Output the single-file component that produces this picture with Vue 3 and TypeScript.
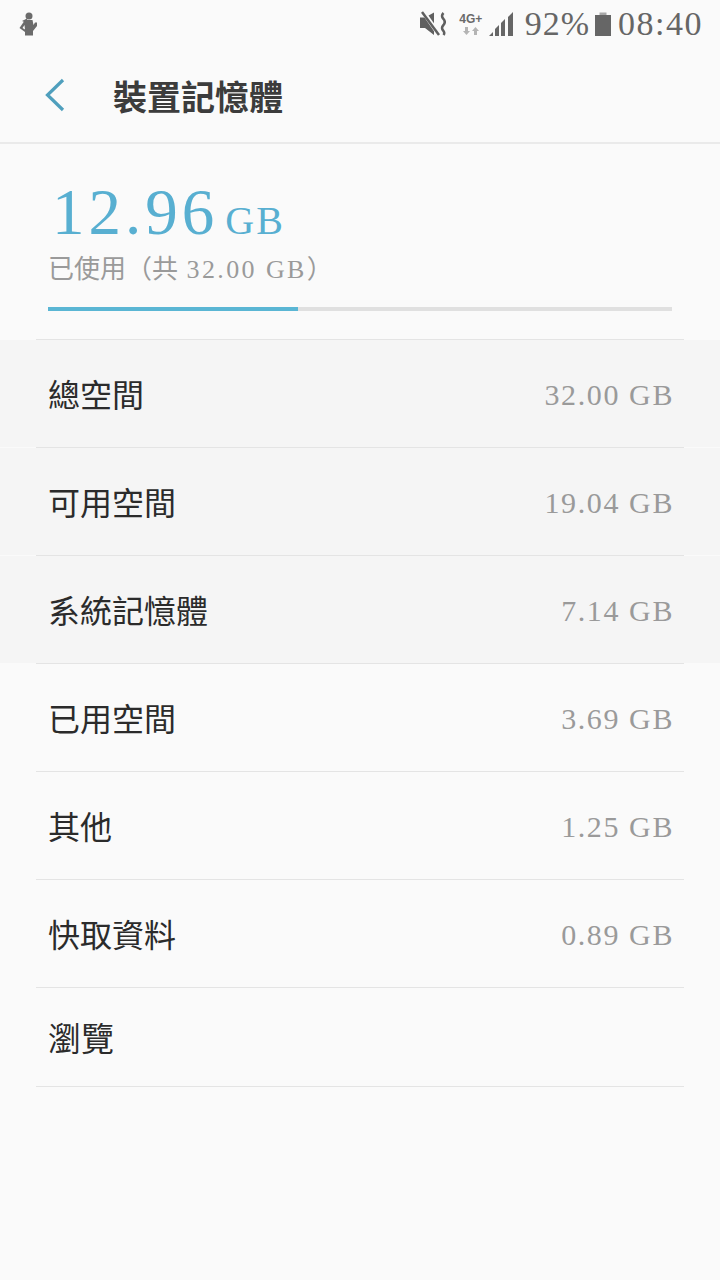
<template>
  <div class="screen">
    <!-- Status bar -->
    <div class="status-bar">
      <svg width="22" height="26" viewBox="0 0 22 26">
        <circle cx="11" cy="5" r="3.500" fill="#6b6b6b" />
        <path d="M10 7 L4 10 L7.500 11.500 Z" fill="#6b6b6b" />
        <path fill-rule="evenodd" d="M7 9 L1.500 17 L7 21 L7 24.500 H15 V20 L19 15 V11.500 H17 L15.500 14 L14.500 9 Z M6.500 14 L4.500 17 L7 18.500 Z" fill="#6b6b6b" />
      </svg>
      <div class="status-right">
        <svg width="26" height="26" viewBox="0 0 26 26">
          <path d="M0 6.500 H5 L14 1.500 V24 L5 17 H0 Z" fill="#5f5f5f" />
          <path d="M2 -1 L20 25" stroke="#fafafa" stroke-width="4.500" />
          <path d="M2 1 L19 24" stroke="#5f5f5f" stroke-width="2.500" />
          <path d="M23.500 2 Q20.500 5 23.500 8 Q26 11 23.500 14 Q20.500 17 23.500 20 Q25 22 23.500 24" fill="none" stroke="#5f5f5f" stroke-width="2.500" />
        </svg>
        <div class="net">
          <span class="net-label">4G+</span>
          <svg width="16" height="10" viewBox="0 0 16 10">
            <path d="M2 1 H5 V5 H7 L3.500 9 L0 5 H2 Z" fill="#b4b4b4" />
            <path d="M11 9 H14 V5 H16 L12.500 1 L9 5 H11 Z" fill="#b4b4b4" />
          </svg>
        </div>
        <svg class="signal" width="25" height="24" viewBox="0 0 25 24">
          <path d="M0 24 L4 20 V24 Z M6 24 V17 L10 13 V24 Z M12 24 V11 L16 7 V24 Z M19 24 V5 L24 0 V24 Z" fill="#666" />
        </svg>
        <span class="pct">92%</span>
        <svg width="16" height="26" viewBox="0 0 16 26">
          <path d="M4.500 1.500 H11.500 V4 H4.500 Z" fill="#a8a8a8" />
          <rect x="0" y="4" width="16" height="21" fill="#666" />
        </svg>
        <span class="clock">08:40</span>
      </div>
    </div>

    <!-- Header -->
    <header class="app-bar">
      <svg class="back" width="24" height="36" viewBox="0 0 24 36">
        <path d="M21 3 L5.500 18 L21 33" fill="none" stroke="#4f9fbd" stroke-width="3.200" />
      </svg>
      <h1 class="title">裝置記憶體</h1>
    </header>

    <!-- Usage summary -->
    <section class="summary">
      <div class="used"><span class="used-num">12.96</span><span class="used-unit">GB</span></div>
      <div class="used-sub">已使用（共 <span class="sub-num">32.00 GB</span>）</div>
      <div class="bar">
        <div class="bar-fill" :style="{ width: usedPercent + '%' }"></div>
      </div>
    </section>

    <!-- Rows -->
    <ul class="rows">
      <li v-for="row in rows" :key="row.label" class="row" :class="{ last: !row.value }">
        <div class="divider"></div>
        <div class="row-body" :class="{ shaded: row.shaded }">
          <span class="row-label">{{ row.label }}</span>
          <span v-if="row.value" class="row-value">{{ row.value }}</span>
        </div>
      </li>
    </ul>
  </div>
</template>

<script setup lang="ts">
interface Row {
  label: string;
  value?: string;
  shaded?: boolean;
}

const usedPercent = 40;

const rows: Row[] = [
  { label: '總空間', value: '32.00 GB', shaded: true },
  { label: '可用空間', value: '19.04 GB', shaded: true },
  { label: '系統記憶體', value: '7.14 GB', shaded: true },
  { label: '已用空間', value: '3.69 GB' },
  { label: '其他', value: '1.25 GB' },
  { label: '快取資料', value: '0.89 GB' },
  { label: '瀏覽' }
];
</script>

<style>
html, body {
  margin: 0;
  background: #fafafa;
}
</style>

<style scoped>
.screen {
  width: 720px;
  height: 1280px;
  overflow: hidden;
  background: #fafafa;
  font-family: "Liberation Serif", "Noto Sans CJK TC", serif;
}

.status-bar {
  height: 50px;
  display: flex;
  align-items: center;
  justify-content: space-between;
  padding: 0 17px 2px 18px;
  box-sizing: border-box;
}

.status-right {
  display: flex;
  align-items: center;
  color: #666;
}

.net {
  display: flex;
  flex-direction: column;
  align-items: center;
  margin-left: 12px;
  width: 26px;
}

.net-label {
  font-family: "Liberation Sans", sans-serif;
  font-weight: 700;
  font-size: 12px;
  line-height: 14px;
  color: #6a6a6a;
}

.signal {
  margin-left: 5px;
}

.pct {
  font-size: 34px;
  line-height: 40px;
  letter-spacing: 1px;
  margin: 0 5px 0 11px;
}

.clock {
  font-size: 34px;
  line-height: 40px;
  letter-spacing: 1.500px;
  margin-left: 7px;
}

.app-bar {
  height: 94px;
  display: flex;
  align-items: center;
  padding: 0 0 2px 42px;
  box-sizing: border-box;
  border-bottom: 2px solid #eaeaea;
}

.back {
  margin-right: 47px;
}

.title {
  margin: 0;
  font-size: 34px;
  font-weight: 700;
  color: #3c3c3c;
}

.summary {
  height: 195px;
  padding: 30px 48px 0;
  box-sizing: border-box;
}

.used {
  height: 76px;
  padding-left: 4px;
  color: #58afd1;
  white-space: nowrap;
}

.used-num {
  font-size: 65px;
  line-height: 76px;
  letter-spacing: 4px;
}

.used-unit {
  font-size: 40px;
  letter-spacing: 2px;
  margin-left: 7px;
}

.used-sub {
  margin-top: 3px;
  font-family: "Liberation Serif", "Noto Sans CJK SC", serif;
  font-size: 26px;
  line-height: 34px;
  color: #9a9a9a;
}

.sub-num {
  margin-left: 2px;
  letter-spacing: 2.400px;
}

.bar {
  height: 4px;
  margin-top: 20px;
  background: #e0e0e0;
}

.bar-fill {
  height: 100%;
  background: #5ab6d4;
}

.rows {
  list-style: none;
  margin: 0;
  padding: 0;
}

.row {
  height: 108px;
}

.row.last {
  height: 100px;
}

.divider {
  height: 1px;
  margin: 0 36px;
  background: #e4e4e4;
}

.row-body {
  height: 107px;
  padding: 0 48px;
  box-sizing: border-box;
  display: flex;
  align-items: center;
  justify-content: space-between;
}

.row-body.shaded {
  background: #f5f5f5;
}

.row.last .row-body {
  height: 99px;
  margin: 0 36px;
  padding: 0 12px;
  border-bottom: 1px solid #e4e4e4;
}

.row-label {
  margin-bottom: 2px;
  font-size: 32px;
  color: #2b2b2b;
}

.row.last .row-label {
  margin-bottom: 0;
  font-size: 33px;
}

.row-value {
  margin: 2px -2px 0 0;
  font-size: 30px;
  color: #9a9a9a;
  letter-spacing: 1.600px;
}
</style>
